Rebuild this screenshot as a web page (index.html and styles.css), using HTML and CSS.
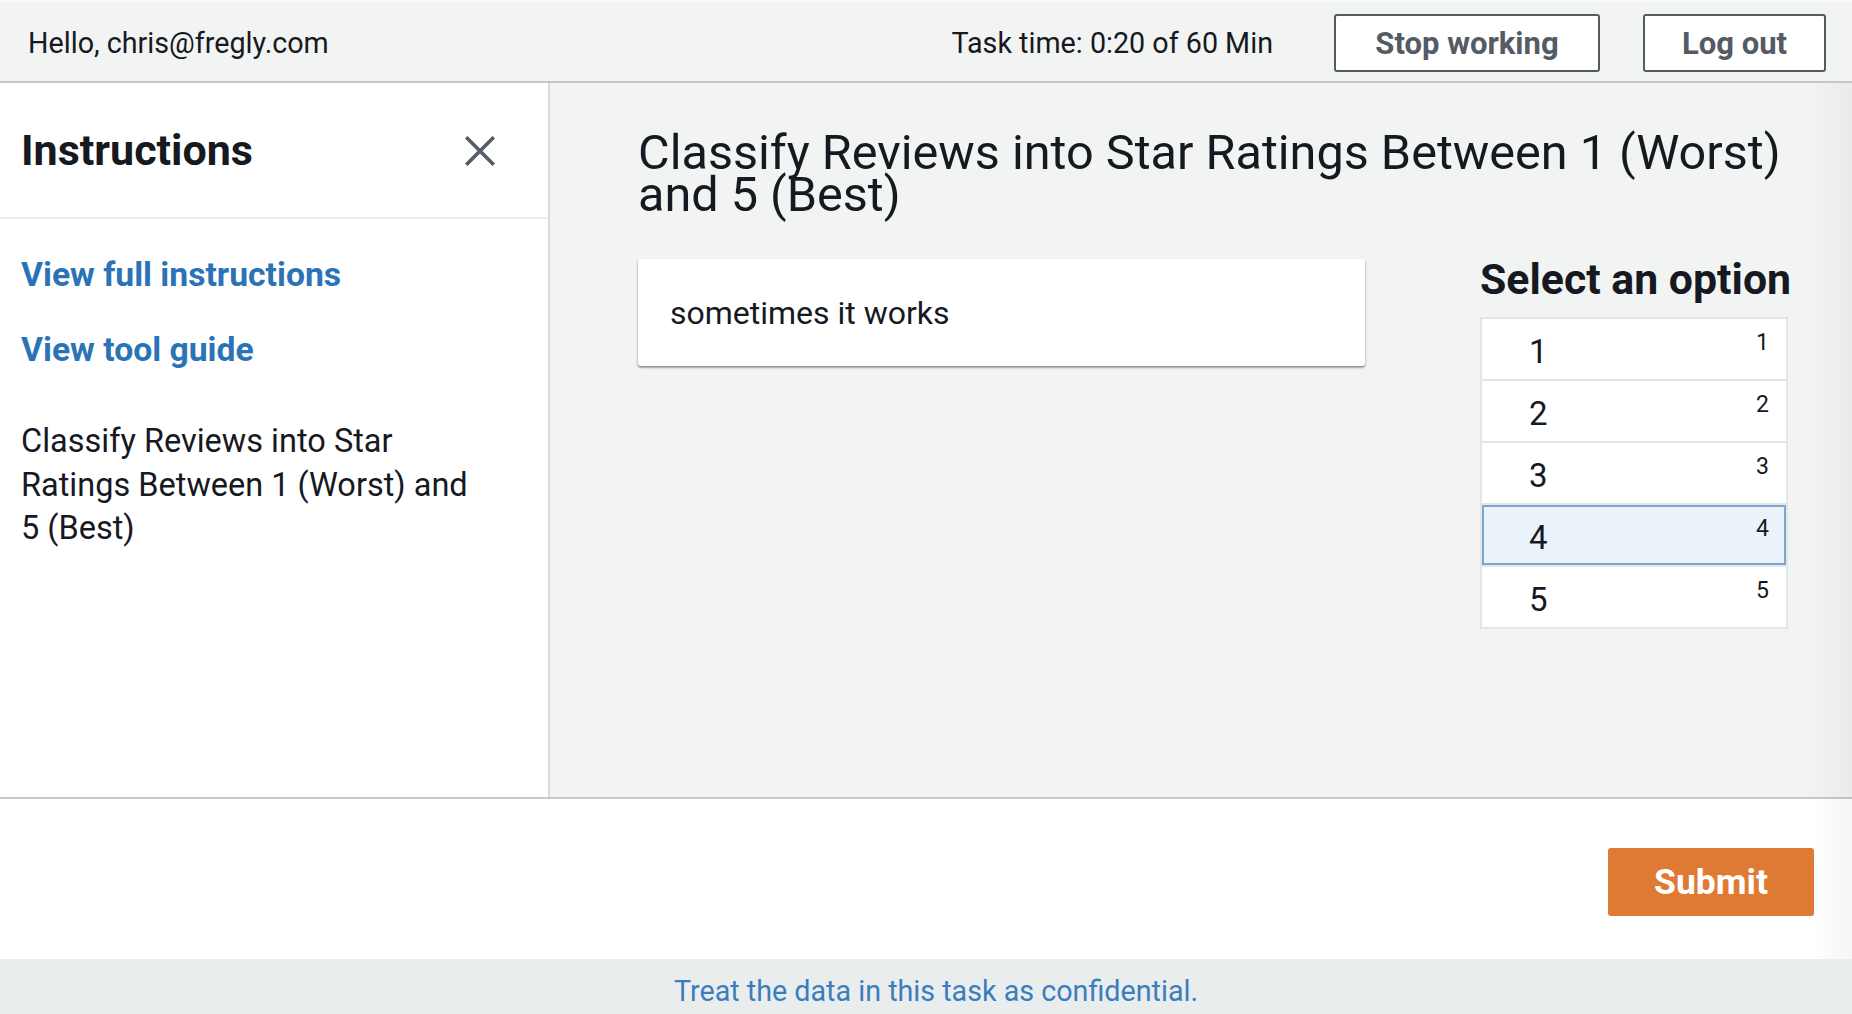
FILE: index.html
```html
<!DOCTYPE html>
<html lang="en">
<head>
<meta charset="utf-8">
<title>Classify Reviews</title>
<link rel="stylesheet" href="styles.css">
</head>
<body>
<div class="page">
  <header class="topbar">
    <div class="greeting">Hello, chris@fregly.com</div>
    <div class="spacer"></div>
    <div class="task-time">Task time: 0:20 of 60 Min</div>
    <button class="btn-outline btn-stop">Stop working</button>
    <button class="btn-outline btn-logout">Log out</button>
  </header>

  <div class="workspace">
    <aside class="sidebar">
      <div class="sidebar-head">
        <h2 class="sidebar-title">Instructions</h2>
        <svg class="close-icon" width="30" height="30" viewBox="0 0 30 30" aria-hidden="true">
          <path d="M2.5 2.5 L27.5 27.5 M27.5 2.5 L2.5 27.5" stroke="#545b64" stroke-width="3.6" stroke-linecap="square" fill="none"/>
        </svg>
      </div>
      <div class="sidebar-body">
        <a class="side-link link-full" href="#">View full instructions</a>
        <a class="side-link link-guide" href="#">View tool guide</a>
        <p class="side-text">Classify Reviews into Star Ratings Between 1 (Worst) and 5 (Best)</p>
      </div>
    </aside>

    <main class="main">
      <h1 class="task-title">Classify Reviews into Star Ratings Between 1 (Worst) and 5 (Best)</h1>
      <div class="task-row">
        <div class="review-card">sometimes it works</div>
        <div class="options">
          <h3 class="options-title">Select an option</h3>
          <div class="option-list">
            <div class="option"><span class="opt-label">1</span><span class="opt-key">1</span></div>
            <div class="option"><span class="opt-label">2</span><span class="opt-key">2</span></div>
            <div class="option"><span class="opt-label">3</span><span class="opt-key">3</span></div>
            <div class="option selected"><span class="opt-label">4</span><span class="opt-key">4</span></div>
            <div class="option"><span class="opt-label">5</span><span class="opt-key">5</span></div>
          </div>
        </div>
      </div>
    </main>
  </div>

  <div class="actions">
    <button class="btn-submit">Submit</button>
  </div>

  <footer class="footer">
    <a class="footer-link" href="#">Treat the data in this task as confidential.</a>
  </footer>

  <div class="edge-shade"></div>
</div>
</body>
</html>
```

FILE: styles.css
```css
* { box-sizing: border-box; }

html, body {
  margin: 0;
  padding: 0;
  background: #ffffff;
}

body {
  font-family: Roboto, "Liberation Sans", sans-serif;
  color: #16191f;
  width: 1852px;
  height: 1014px;
  overflow: hidden;
}

.page {
  position: relative;
  display: flex;
  flex-direction: column;
  height: 1014px;
}

/* ---------- top bar ---------- */
.topbar {
  height: 83px;
  flex: 0 0 83px;
  display: flex;
  align-items: center;
  padding: 3px 26px 0 28px;
  background: #f2f3f3;
  border-top: 2px solid #f8f9f9;
  border-bottom: 2px solid #c6c8c8;
}

.greeting,
.task-time {
  font-size: 28.7px;
  color: #16191f;
  white-space: nowrap;
}

.spacer { flex: 1 1 auto; }

.task-time { margin-right: 61px; }

.btn-outline {
  height: 58px;
  background: #ffffff;
  border: 2px solid #545b64;
  border-radius: 3px;
  font-family: Roboto, "Liberation Sans", sans-serif;
  font-weight: 700;
  font-size: 31px;
  color: #545b64;
  padding: 0;
  cursor: pointer;
}

.btn-stop { width: 266px; margin-right: 43px; }
.btn-logout { width: 183px; }

/* ---------- workspace ---------- */
.workspace {
  flex: 0 0 716px;
  height: 716px;
  display: flex;
  border-bottom: 2px solid #c6c8c8;
  background: #f2f3f3;
}

.sidebar {
  flex: 0 0 550px;
  background: #ffffff;
  border-right: 2px solid #d5dbdb;
}

.sidebar-head {
  height: 136px;
  display: flex;
  align-items: center;
  justify-content: space-between;
  padding: 0 53px 0 21px;
  border-bottom: 2px solid #eaeded;
}

.sidebar-title {
  margin: 0;
  font-size: 43px;
  font-weight: 700;
  line-height: 50px;
  color: #16191f;
}

.close-icon { display: block; margin-top: 2px; }

.sidebar-body {
  padding: 34px 21px 0 21px;
}

.side-link {
  display: block;
  font-size: 33.7px;
  font-weight: 700;
  line-height: 44px;
  color: #2b73b7;
  text-decoration: none;
  width: max-content;
}

.link-guide { margin-top: 31px; }

.side-text {
  margin: 48px 0 0 0;
  font-size: 32.5px;
  line-height: 43.5px;
  max-width: 462px;
  color: #16191f;
}

/* ---------- main ---------- */
.main {
  flex: 1 1 auto;
  min-width: 0;
  padding: 49px 64px 0 88px;
}

.task-title {
  margin: 0;
  font-size: 48.6px;
  font-weight: 400;
  line-height: 42px;
  color: #16191f;
}

.task-row {
  display: flex;
  align-items: flex-start;
  justify-content: space-between;
  margin-top: 43px;
}

.review-card {
  flex: 0 0 727px;
  height: 107px;
  display: flex;
  align-items: center;
  padding-left: 32px;
  background: #ffffff;
  border-radius: 3px;
  font-size: 32px;
  color: #16191f;
  box-shadow: 0 2px 2px 0 rgba(0, 28, 36, 0.3),
              1px 1px 2px 0 rgba(0, 28, 36, 0.12),
              -1px 1px 2px 0 rgba(0, 28, 36, 0.12);
}

.options {
  flex: 0 0 308px;
  width: 308px;
  min-width: 0;
}

.options-title {
  margin: 0;
  font-size: 42.8px;
  font-weight: 700;
  line-height: 40px;
  color: #16191f;
  white-space: nowrap;
}

.option-list {
  margin-top: 18px;
  display: flex;
  flex-direction: column;
  gap: 2px;
  padding: 2px;
  background: #e3e6e6;
}

.option {
  position: relative;
  height: 60px;
  display: flex;
  align-items: center;
  padding-left: 47px;
  background: #ffffff;
}

.option.selected {
  background: #eaf3fa;
  box-shadow: inset 0 0 0 2px #7ca6cd;
}

.opt-label {
  font-size: 33px;
  line-height: 1;
  color: #16191f;
  padding-top: 4px;
}

.opt-key {
  position: absolute;
  top: 12px;
  right: 17px;
  font-size: 23px;
  line-height: 1;
  color: #16191f;
}

/* ---------- actions ---------- */
.actions {
  flex: 0 0 160px;
  display: flex;
  justify-content: flex-end;
  align-items: flex-start;
  padding: 49px 38px 0 0;
  background: #ffffff;
}

.btn-submit {
  width: 206px;
  height: 68px;
  border: none;
  border-radius: 3px;
  background: #df7a35;
  color: #ffffff;
  font-family: Roboto, "Liberation Sans", sans-serif;
  font-weight: 700;
  font-size: 35.5px;
  padding: 0;
}

/* ---------- footer ---------- */
.footer {
  flex: 1 1 auto;
  background: #eaeded;
  text-align: center;
  padding: 9px 0 0 20px;
  line-height: 46px;
}

.footer-link {
  font-size: 28.7px;
  color: #3b7dbd;
  text-decoration: none;
}

.edge-shade {
  position: absolute;
  top: 83px;
  right: 0;
  width: 42px;
  height: 876px;
  background: linear-gradient(to right, rgba(0, 0, 0, 0), rgba(0, 0, 0, 0.035));
  pointer-events: none;
}
```
